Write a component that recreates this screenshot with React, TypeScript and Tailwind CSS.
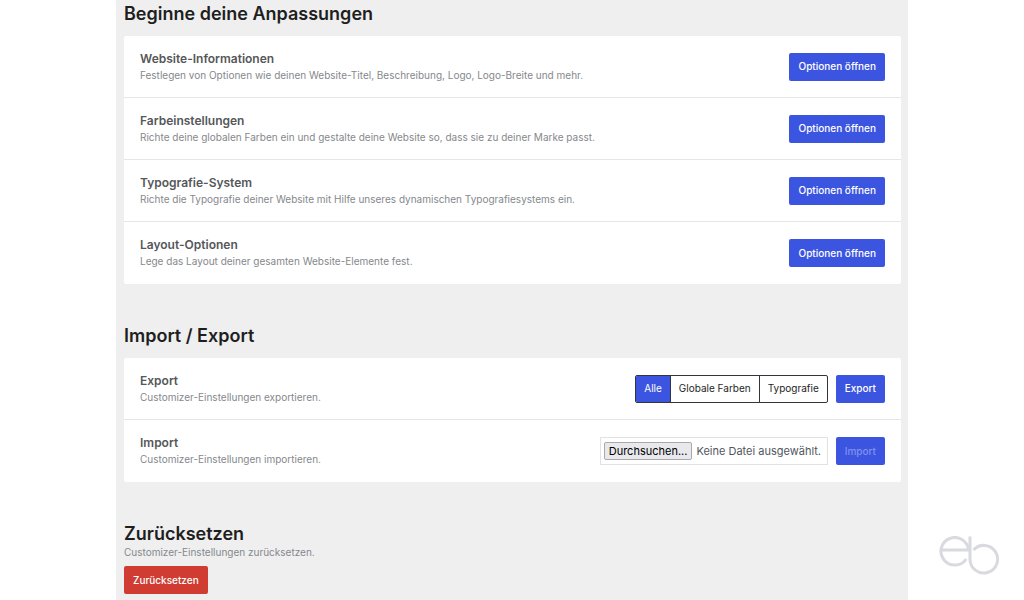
import { useState } from "react";
import type { ReactNode } from "react";

const options = [
  {
    title: "Website-Informationen",
    text: "Festlegen von Optionen wie deinen Website-Titel, Beschreibung, Logo, Logo-Breite und mehr.",
  },
  {
    title: "Farbeinstellungen",
    text: "Richte deine globalen Farben ein und gestalte deine Website so, dass sie zu deiner Marke passt.",
  },
  {
    title: "Typografie-System",
    text: "Richte die Typografie deiner Website mit Hilfe unseres dynamischen Typografiesystems ein.",
  },
  {
    title: "Layout-Optionen",
    text: "Lege das Layout deiner gesamten Website-Elemente fest.",
  },
];

const scopes = ["Alle", "Globale Farben", "Typografie"];

function Heading({ children }: { children: ReactNode }) {
  return <h2 className="text-[18px] leading-6 font-semibold text-[#1e1e1e]">{children}</h2>;
}

function Card({ children }: { children: ReactNode }) {
  return <div className="mt-2.5 divide-y divide-[#e6e6e6] rounded-xs bg-white">{children}</div>;
}

function Row({ title, text, children }: { title: string; text: string; children: ReactNode }) {
  return (
    <div className="flex min-h-[62px] items-center justify-between gap-4 px-4">
      <div>
        <h3 className="text-[12px] leading-4 font-semibold text-[#55575a]">{title}</h3>
        <p className="text-[10px] leading-4 text-[#85888c]">{text}</p>
      </div>
      <div className="flex shrink-0 items-center gap-2">{children}</div>
    </div>
  );
}

function Button({ children, disabled }: { children: ReactNode; disabled?: boolean }) {
  return (
    <button
      type="button"
      disabled={disabled}
      className="h-7 rounded-xs bg-[#3b55e0] px-[9px] text-[10px] font-medium text-white disabled:text-[#8091f0]"
    >
      {children}
    </button>
  );
}

function Logo() {
  return (
    <svg
      viewBox="0 0 61 40"
      className="fixed right-6 bottom-6 h-10 w-[61px]"
      fill="none"
      stroke="#d9dadf"
      strokeWidth="3"
      aria-hidden="true"
    >
      <path d="M1.8 14H29.5A13.8 13.8 0 1 0 27.2 23" />
      <path d="M31 .5V23A13.8 13.8 0 1 0 34.5 14" />
    </svg>
  );
}

export default function App() {
  const [scope, setScope] = useState("Alle");
  const [fileName, setFileName] = useState("");

  return (
    <div className="min-h-screen bg-white font-[Inter,'Liberation_Sans',sans-serif]">
      <main className="mx-auto min-h-screen w-full max-w-[792px] bg-[#efefef] pt-0.5 pr-[7px] pb-1.5 pl-2">
        <section>
          <Heading>Beginne deine Anpassungen</Heading>
          <Card>
            {options.map((option) => (
              <Row key={option.title} title={option.title} text={option.text}>
                <Button>Optionen öffnen</Button>
              </Row>
            ))}
          </Card>
        </section>

        <section className="pt-10">
          <Heading>Import / Export</Heading>
          <Card>
            <Row title="Export" text="Customizer-Einstellungen exportieren.">
              <div className="flex h-7 divide-x divide-[#32353a] overflow-hidden rounded-xs border border-[#32353a]">
                {scopes.map((name) => (
                  <button
                    key={name}
                    type="button"
                    aria-pressed={scope === name}
                    onClick={() => setScope(name)}
                    className="px-2 text-[10px] text-[#1e1e1e] aria-pressed:bg-[#3b55e0] aria-pressed:text-white"
                  >
                    {name}
                  </button>
                ))}
              </div>
              <Button>Export</Button>
            </Row>
            <Row title="Import" text="Customizer-Einstellungen importieren.">
              <label className="relative flex h-7 w-[228px] items-center gap-1 border border-[#e2e2e2] px-[3px] text-[11px] text-[#50575e]">
                <input
                  type="file"
                  className="sr-only"
                  onChange={(event) => setFileName(event.target.files?.[0]?.name ?? "")}
                />
                <span className="rounded-xs border border-[#a9a9ad] bg-[#e9e9ed] px-1 leading-4 text-black">
                  Durchsuchen...
                </span>
                <span className="truncate">{fileName || "Keine Datei ausgewählt."}</span>
              </label>
              <Button disabled={!fileName}>Import</Button>
            </Row>
          </Card>
        </section>

        <section className="pt-10">
          <Heading>Zurücksetzen</Heading>
          <p className="text-[10px] leading-3 text-[#85888c]">Customizer-Einstellungen zurücksetzen.</p>
          <button
            type="button"
            className="mt-2 h-7 rounded-xs bg-[#d03c32] px-[9px] text-[10px] font-medium text-white"
          >
            Zurücksetzen
          </button>
        </section>
      </main>
      <Logo />
    </div>
  );
}
